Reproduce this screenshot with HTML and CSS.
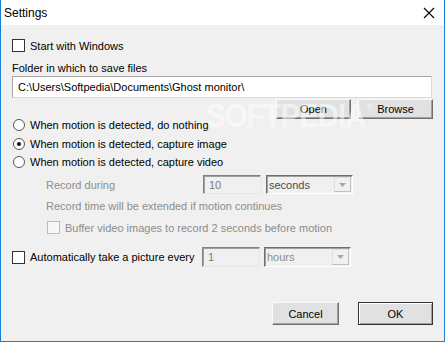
FILE: index.html
```html
<!DOCTYPE html>
<html>
<head>
<meta charset="utf-8">
<link rel="stylesheet" href="styles.css">
</head>
<body>
<div class="window">
  <div class="titlebar">
    <span class="title">Settings</span>
    <svg class="close" width="12" height="12" viewBox="0 0 12 12"><path d="M1 1 L11 11 M11 1 L1 11" stroke="#000" stroke-width="1.1" fill="none"/></svg>
  </div>
  <div class="content">
    <div class="row r-start"><span class="check"></span><span>Start with Windows</span></div>
    <div class="row r-label"><span>Folder in which to save files</span></div>
    <div class="edit path">C:\Users\Softpedia\Documents\Ghost monitor\</div>
    <div class="row r-buttons">
      <div class="btn w75">Open</div>
      <div class="btn w75">Browse</div>
    </div>
    <div class="row r-radio1"><span class="radio"></span><span>When motion is detected, do nothing</span></div>
    <div class="row r-radio2"><span class="radio on"></span><span>When motion is detected, capture image</span></div>
    <div class="row r-radio3"><span class="radio"></span><span>When motion is detected, capture video</span></div>
    <div class="row r-record">
      <span class="dis lbl-record">Record during</span>
      <div class="dedit">10</div>
      <div class="combo"><span class="ctext">seconds</span><span class="arrow"><svg width="7" height="4" viewBox="0 0 7 4"><path d="M0 0 H7 L3.5 4 Z" fill="#a6a6a6"/></svg></span></div>
    </div>
    <div class="row r-note"><span class="dis">Record time will be extended if motion continues</span></div>
    <div class="row r-buffer"><span class="check disc"></span><span class="dis">Buffer video images to record 2 seconds before motion</span></div>
    <div class="row r-auto">
      <span class="check"></span><span class="lbl-auto">Automatically take a picture every</span>
      <div class="dedit tall">1</div>
      <div class="combo tall"><span class="ctext light">hours</span><span class="arrow"><svg width="7" height="4" viewBox="0 0 7 4"><path d="M0 0 H7 L3.5 4 Z" fill="#a6a6a6"/></svg></span></div>
    </div>
    <div class="row r-footer">
      <div class="btn cancel">Cancel</div>
      <div class="btn w75 default">OK</div>
    </div>
  </div>
  <div class="watermark">SOFTPEDIA<sup>®</sup></div>
</div>
</body>
</html>
```

FILE: styles.css
```css
* { box-sizing: border-box; }
html, body { margin: 0; padding: 0; }
body { width: 445px; height: 342px; overflow: hidden; font-family: "Liberation Sans", Arial, sans-serif; font-size: 11px; color: #000; }
.window { position: relative; width: 445px; height: 342px; border: 1px solid #1c7fd6; border-top: none; background: #f0f0f0; display: flex; flex-direction: column; }
.titlebar { height: 25px; background: #fff; display: flex; align-items: center; justify-content: space-between; padding: 0 9px 0 3px; }
.title { font-size: 12px; }
.close { display: block; }
.content { flex: 1; display: flex; flex-direction: column; padding: 0 11px 16px 11px; }
.row { display: flex; align-items: center; }
.check { width: 13px; height: 13px; border: 1px solid #333; background: #fff; flex: none; margin-right: 5px; }
.check.disc { border-color: #bcbcbc; background: #f7f7f7; }
.radio { width: 12px; height: 12px; border-radius: 50%; border: 1px solid #555; background: #fff; flex: none; margin: 0 5px 0 1px; display: flex; align-items: center; justify-content: center; }
.radio.on::after { content: ""; width: 4px; height: 4px; border-radius: 50%; background: #111; }
.dis { color: #8d8d8d; }
.r-start { margin-top: 14px; height: 13px; }
.r-label { margin-top: 9px; height: 14px; }
.edit { margin-top: 1px; height: 22px; width: 420px; background: #fff; border: 1px solid #a5a5a5; border-right-color: #dcdcdc; border-bottom-color: #dcdcdc; padding: 0 5px; line-height: 20px; }
.r-buttons { margin-top: 1px; height: 20px; justify-content: flex-end; gap: 7px; padding-right: 0; }
.btn { height: 100%; background: #e1e1e1; border: 1px solid #adadad; border-top-color: #fbfbfb; border-left-color: #fbfbfb; border-right-color: #707070; border-bottom-color: #707070; display: flex; align-items: center; justify-content: center; box-shadow: inset -1px -1px 0 #a0a0a0; }
.w75 { width: 75px; }
.cancel { width: 67px; }
.default { border: 1px solid #333; box-shadow: inset 1px 1px 0 #fff, inset -1px -1px 0 #a0a0a0; }
.r-radio1 { margin-top: 0; height: 12px; }
.r-radio2 { margin-top: 7px; height: 12px; }
.r-radio3 { margin-top: 6px; height: 12px; }
.r-record { margin-top: 7px; height: 19px; padding-left: 34px; }
.lbl-record { width: 157px; }
.dedit { width: 58px; height: 100%; border: 1px solid #e6e6e6; border-top-color: #828282; border-left-color: #828282; box-shadow: inset 1px 1px 0 #a0a0a0; background: #f0f0f0; color: #7a7a7a; padding-left: 5px; display: flex; align-items: center; flex: none; }
.combo { width: 87px; height: 100%; margin-left: 5px; border: 1px solid #fff; border-top-color: #6e6e6e; border-left-color: #6e6e6e; box-shadow: inset 1px 1px 0 #a0a0a0; background: #f0f0f0; display: flex; align-items: stretch; justify-content: space-between; flex: none; }
.ctext { padding-left: 2px; display: flex; align-items: center; color: #4a4a4a; }
.ctext.light { color: #8d8d8d; }
.arrow { width: 17px; margin: 1px 1px 1px 0; background: #f0f0f0; border: 1px solid #e0e0e0; border-right-color: #c0c0c0; border-bottom-color: #c0c0c0; display: flex; align-items: center; justify-content: center; }
.r-note { margin-top: 5px; height: 13px; padding-left: 34px; }
.r-buffer { margin-top: 9px; height: 13px; padding-left: 35px; }
.r-auto { margin-top: 13px; height: 20px; }
.lbl-auto { width: 172px; }
.combo.tall { margin-left: 4px; }
.r-footer { margin-top: auto; height: 23px; justify-content: flex-end; gap: 19px; }
.watermark { position: absolute; left: 205px; top: 96px; font-size: 34px; font-weight: bold; color: rgba(255,255,255,0.5); letter-spacing: -1px; transform: scaleX(0.86); transform-origin: left top; pointer-events: none; white-space: nowrap; font-family: "Liberation Sans", Arial, sans-serif; }
.watermark sup { font-size: 10px; vertical-align: top; position: relative; top: 6px; left: 1px; }
```
